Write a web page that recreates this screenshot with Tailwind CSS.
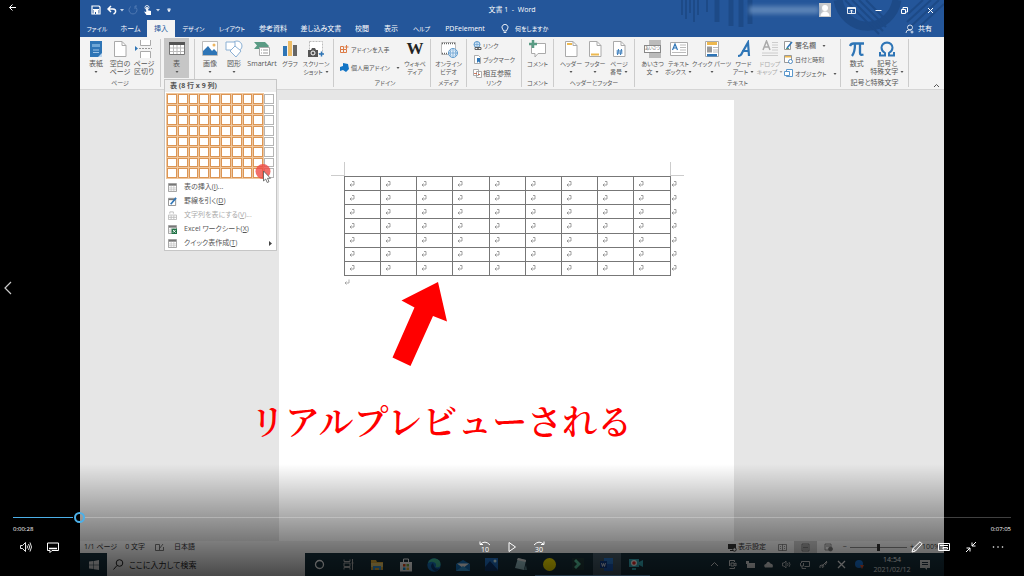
<!DOCTYPE html>
<html lang="ja">
<head>
    <meta charset="UTF-8">
    <meta name="viewport" content="width=device-width, initial-scale=1.0">
    <title>文書 1 - Word</title>
    <script src="https://cdn.jsdelivr.net/npm/@tailwindcss/browser@4"></script>
</head>
<body class="bg-black font-['Open_Sans','Noto_Sans_CJK_JP',sans-serif] text-[7px] leading-[8px] whitespace-nowrap [font-feature-settings:'palt']">
    <svg class="hidden">
        <symbol id="caret" viewBox="0 0 4 4"><path d="M.5 1h3L2 3z" fill="#555"/></symbol>
        <symbol id="grid" viewBox="0 0 10 10"><path d="M.5.5h9v9h-9z" fill="#fff" stroke="#999"/><path d="M1 1h8v2H1z" fill="#777"/><path d="M1 5.500h8M1 7.500h8M3.500 3v6M6.500 3v6" stroke="#bbb" stroke-width=".7"/></symbol>
        <symbol id="sheet" viewBox="0 0 18 18"><path d="M3.500 1.500h7.500l4 4v11h-11.500z" fill="#fff" stroke="#aaa"/><path d="M11 1.500v4h4" fill="none" stroke="#aaa"/></symbol>
    </svg>

    <div class="relative h-screen overflow-hidden">
        <!-- Recorded screen -->
        <div class="mx-20 flex h-full flex-col overflow-hidden">
            <header class="relative bg-[#24569a] text-white">
                <svg class="absolute right-0 top-0 h-[37px] w-[270px]" viewBox="0 0 270 37" fill="none" stroke="#1d4a87">
                    <path d="M8 0v15M12 0v19M16 0v13M20 0v22M24 0v15M33 0v12" stroke-width="2"/>
                    <path d="M43 0v22M57 0v26M67 0v27M76 0v24" stroke-width="5"/>
                    <path d="M164 0a30 32 0 0 0 59 0" stroke-width="9"/>
                    <path d="M171 0l34 34M178 0l31 31M185 0l27 27M192 0l22 22M265 0l-32 30M257 0l-24 22M249 0l-15 14M270 4l-26 24" stroke-width="2"/>
                </svg>
                <div class="relative grid h-5 grid-cols-[1fr_auto_1fr] items-center">
                    <div class="flex items-center pl-[11px]">
                        <button aria-label="上書き保存"><svg class="size-[10px]" viewBox="0 0 10 10"><path d="M1 1h7l1 1v7H1z" fill="none" stroke="#fff" stroke-width="1.200"/><path d="M2.500 5h5v4h-5z" fill="#fff"/><path d="M4 7h1v2H4z" fill="#24569a"/><path d="M2 4.500h6" stroke="#fff"/></svg></button>
                        <button class="ml-[6px]" aria-label="元に戻す"><svg class="size-[10px]" viewBox="0 0 10 10"><path d="M4 1L1 4l3 3M1 4h5q3 0 2.500 3Q8 8.500 6.500 9" fill="none" stroke="#fff" stroke-width="1.500"/></svg></button>
                        <svg class="ml-[3px] size-1" viewBox="0 0 4 4"><path d="M0 1h4L2 3.500z" fill="#ccd8ea"/></svg>
                        <button class="ml-[4px]" aria-label="やり直し"><svg class="size-[10px]" viewBox="0 0 10 10"><path d="M3 1.500a4 4 0 1 0 4 0M7 4V1h2" fill="none" stroke="#4f78b2"/></svg></button>
                        <button class="ml-[5px]" aria-label="タッチ"><svg class="size-[10px]" viewBox="0 0 10 10"><circle cx="4" cy="2.500" r="2" fill="none" stroke="#fff" stroke-width=".8"/><path d="M3.200 2h1.600v3.200l3.200.8V10H3.500L1 6.500l2.200.5z" fill="#fff"/></svg></button>
                        <svg class="ml-[3px] size-1" viewBox="0 0 4 4"><path d="M0 1h4L2 3.500z" fill="#ccd8ea"/></svg>
                        <svg class="ml-[7px] size-1" viewBox="0 0 4 4"><path d="M.5.5h3M.5 1.500h3L2 4z" stroke="#fff" stroke-width=".5" fill="#fff"/></svg>
                    </div>
                    <h1>文書 1 &nbsp;- &nbsp;Word</h1>
                    <div class="flex items-center justify-end pr-[9px]">
                        <div class="h-2 w-[70px] bg-[#5b83b6] blur-[2px]"></div>
                        <svg class="h-[14px] w-3" viewBox="0 0 12 14"><path d="M0 0h12v14H0z" fill="#ccc"/><circle cx="6" cy="5" r="3" fill="#fff"/><path d="M1.500 13c0-6 9-6 9 0z" fill="#fff"/></svg>
                        <button class="ml-[16px]" aria-label="リボンの表示オプション"><svg class="size-[9px]" viewBox="0 0 9 9" fill="none" stroke="#fff"><path d="M.5 1.500h8v6h-8zM.5 2.500h8M4.500 7V4M3 5.500L4.500 4 6 5.500" stroke-width=".9"/></svg></button>
                        <button class="ml-[18px]" aria-label="最小化"><svg class="size-[9px]" viewBox="0 0 9 9"><path d="M1.500 4.500h6" stroke="#fff"/></svg></button>
                        <button class="ml-[17px]" aria-label="元に戻す (縮小)"><svg class="size-[9px]" viewBox="0 0 9 9" fill="none" stroke="#fff"><path d="M1.500 3.500h4v4h-4zM3 3.500v-2h4.500V6H6"/></svg></button>
                        <button class="ml-[17px]" aria-label="閉じる"><svg class="size-[9px]" viewBox="0 0 9 9"><path d="M2 2l5 5M7 2L2 7" stroke="#fff"/></svg></button>
                    </div>
                </div>
                <nav class="relative flex h-[17px] items-stretch">
                    <button class="w-[34px] text-[6px]">ファイル</button>
                    <button class="w-[33px]">ホーム</button>
                    <button class="w-7 bg-[#f3f3f3] text-[#24569a]">挿入</button>
                    <button class="w-[37px] text-[6px]">デザイン</button>
                    <button class="w-10 text-[6px]">レイアウト</button>
                    <button class="w-[42px]">参考資料</button>
                    <button class="w-[54px]">差し込み文書</button>
                    <button class="w-7">校閲</button>
                    <button class="w-[30px]">表示</button>
                    <button class="w-[31px] text-[6px]">ヘルプ</button>
                    <button class="w-14">PDFelement</button>
                    <button class="ml-2 flex items-center gap-[6px]"><svg class="h-[10px] w-2" viewBox="0 0 8 10" fill="none" stroke="#fff" stroke-width=".9"><path d="M2.500 7Q2.500 6 1.500 5a3 3 0 1 1 5 0Q5.500 6 5.500 7zM2.700 8.500h2.600"/></svg><span class="text-[6px]">何をしますか</span></button>
                    <button class="ml-auto mr-3 flex items-center gap-[3px]"><svg class="size-[10px]" viewBox="0 0 10 10" fill="none" stroke="#fff" stroke-width=".8"><circle cx="5" cy="3.500" r="2.500"/><path d="M1 9q0-3 3-3h2M7 6.500v3M5.500 8h3"/></svg>共有</button>
                </nav>
            </header>

            <section class="relative flex h-[53px] shrink-0 border-b border-[#d5d5d5] bg-[#f3f3f3] text-[#555]">
                <div class="my-0.5 flex w-[81px] flex-col justify-between border-r border-[#ccc] px-1 pt-px">
                    <div class="flex">
                        <button class="flex w-6 flex-col items-center"><svg class="mb-0.5 size-[18px]" viewBox="0 0 18 18"><path d="M3 1h12v16H3z" fill="#2e75b6"/><path d="M5 4h8v3H5z" fill="#6ea6d6"/><path d="M6 10h6M6 12.500h6" stroke="#9cc3e6"/><path d="M11 17l4-4v4z" fill="#bcd6ee"/></svg>表紙<svg class="mt-0.5 size-1"><use href="#caret"/></svg></button>
                        <button class="flex w-6 flex-col items-center"><svg class="mb-0.5 size-[18px]"><use href="#sheet"/></svg>空白の<br>ページ</button>
                        <button class="flex w-6 flex-col items-center"><svg class="mb-0.5 size-[18px]" viewBox="0 0 18 18"><path d="M5.500 0v5.500h10V0M5.500 18v-6.500h10V18" fill="#fff" stroke="#aaa"/><path d="M4 8.500h13" stroke="#999" stroke-dasharray="2 1"/><path d="M0 6l3 2.500L0 11z" fill="#2e75b6"/></svg>ページ<br>区切り</button>
                    </div>
                    <span class="text-center text-[6px]">ページ</span>
                </div>
                <div class="w-[33px] pl-[3px] pt-px">
                    <button class="flex h-10 w-[25px] flex-col items-center bg-[#c6c6c6] pt-0.5"><svg class="mb-0.5 size-[18px]" viewBox="0 0 18 18"><path d="M1.500 2.500h15v12h-15z" fill="#fff" stroke="#777"/><path d="M1 2h16v3H1z" fill="#555"/><path d="M2 8h14M2 11.500h14M5.500 5v9M9 5v9M12.500 5v9" stroke="#bbb"/></svg>表<svg class="mt-0.5 size-1"><use href="#caret"/></svg></button>
                </div>
                <div class="my-0.5 flex w-[140px] border-x border-[#ccc] pl-[3px] pt-px">
                    <button class="flex w-6 flex-col items-center"><svg class="mb-0.5 size-[18px]" viewBox="0 0 18 18"><path d="M1.500 1.500h15v14h-15z" fill="#fff" stroke="#bbb"/><path d="M2 15v-4l5-5 4 5 2-2 3 3v3z" fill="#2e75b6"/><circle cx="13" cy="5" r="1.500" fill="#edb560"/></svg>画像<svg class="mt-0.5 size-1"><use href="#caret"/></svg></button>
                    <button class="flex w-6 flex-col items-center"><svg class="mb-0.5 size-[18px]" viewBox="0 0 18 18" fill="#fff" stroke="#8bb0d4"><circle cx="12" cy="6" r="5"/><path d="M1 2h9v8H1z"/><path d="M10 6l6 5-5 6-6-6z"/></svg>図形<svg class="mt-0.5 size-1"><use href="#caret"/></svg></button>
                    <button class="flex w-8 flex-col items-center"><svg class="mb-0.5 size-[18px]" viewBox="0 0 18 18"><path d="M1 2h11l4 4-2 3H1l3-3.500z" fill="#5a9b84"/><path d="M6.500 7.500h10v8h-10z" fill="#fff" stroke="#aaa"/><path d="M8 10h1M10 10h5M8 13h1M10 13h5" stroke="#999"/></svg>SmartArt</button>
                    <button class="flex w-6 flex-col items-center text-[6px]"><svg class="mb-0.5 size-[18px]" viewBox="0 0 18 18"><path d="M2 6h4v10H2z" fill="#2e75b6"/><path d="M7 1h4v15H7z" fill="#edbc67"/><path d="M12 5h4v11h-4z" fill="#666"/></svg>グラフ</button>
                    <button class="flex w-7 flex-col items-center text-[6px]"><svg class="mb-0.5 size-[18px]" viewBox="0 0 18 18"><path d="M2.500 1.500h13v12h-13z" fill="#fff" stroke="#bbb" stroke-dasharray="2 1"/><path d="M1 10h3l1-2h3l1 2h2v7H1z" fill="#555"/><circle cx="6" cy="13" r="2" fill="none" stroke="#fff"/><path d="M12 14h5M14.500 11.500v5" stroke="#2e75b6" stroke-width="1.500"/></svg>スクリーン<span class="flex items-center gap-0.5">ショット<svg class="size-1"><use href="#caret"/></svg></span></button>
                </div>
                <div class="my-0.5 flex w-[97px] flex-col justify-between border-r border-[#ccc] pl-[6px] pt-px">
                    <div class="flex">
                        <div class="flex w-[62px] flex-col gap-[9px] pt-[5px] text-[6px]">
                            <button class="flex items-center gap-0.5"><svg class="size-[9px]" viewBox="0 0 9 9" fill="none" stroke="#dd7b45"><path d="M.5 1.500h3v3h-3zM.5 4.500h3v3h-3zM3.500 4.500h3v3h-3zM6.500 0v4M4.500 2h4"/></svg>アドインを入手</button>
                            <button class="flex items-center gap-0.5"><svg class="size-[9px]" viewBox="0 0 9 9"><path d="M3 0l5 1 1 5-3 3-3-2-3 1V4l3-1z" fill="#1274c5"/></svg>個人用アドイン<svg class="ml-1 size-1"><use href="#caret"/></svg></button>
                        </div>
                        <button class="flex w-[26px] flex-col items-center text-[6px]"><span class="mb-0.5 h-[18px] font-['Liberation_Serif',serif] text-[17px] leading-[18px] font-bold text-[#222]">W</span>ウィキペ<br>ディア</button>
                    </div>
                    <span class="text-center text-[6px]">アドイン</span>
                </div>
                <div class="my-0.5 flex w-9 flex-col justify-between border-r border-[#ccc] pt-px text-[6px]">
                    <button class="flex flex-col items-center"><svg class="mb-0.5 size-[18px]" viewBox="0 0 18 18"><path d="M1.500 2.500h14v12h-14z" fill="#fff" stroke="#bbb"/><path d="M2 3.500h14M2 13.500h8" stroke="#666" stroke-width="1.500" stroke-dasharray="1 1"/><circle cx="13" cy="13" r="4.500" fill="#e4f0fa" stroke="#5b98cc"/><path d="M9 13h8M13 9v8M11 10q-2 3 0 6M15 10q2 3 0 6" fill="none" stroke="#5b98cc" stroke-width=".7"/></svg>オンライン<br>ビデオ</button>
                    <span class="text-center">メディア</span>
                </div>
                <div class="my-0.5 flex w-[55px] flex-col justify-between border-r border-[#ccc] pl-[6px] pt-0.5 text-[6px]">
                    <div class="flex flex-col gap-[5px]">
                        <button class="flex items-center gap-px"><svg class="size-[9px]" viewBox="0 0 9 9" fill="none"><circle cx="4" cy="3.500" r="3" fill="#d5e6f5" stroke="#5b98cc"/><path d="M1 3.500h6M4 .5v6" stroke="#5b98cc" stroke-width=".6"/><path d="M2 6.500h3v2H2zM5 6.500h3v2H5z" stroke="#555" stroke-width=".9"/></svg>リンク</button>
                        <button class="flex items-center gap-px"><svg class="size-[9px]" viewBox="0 0 9 9"><path d="M1.500.5h4l2 2v6h-6z" fill="#fff" stroke="#999" stroke-width=".8"/><path d="M4 3h3v5L5.500 6.500 4 8z" fill="#2e75b6"/></svg>ブックマーク</button>
                        <button class="flex items-center gap-px text-[7px]"><svg class="size-[9px]" viewBox="0 0 9 9" fill="#fff" stroke="#999" stroke-width=".8"><path d="M.5.500h5v6h-5zM3.500 2.500h5v6h-5z"/><path d="M1 4.500h3M5 5.500h2" stroke="#c55a3a"/></svg>相互参照</button>
                    </div>
                    <span class="pr-[6px] text-center">リンク</span>
                </div>
                <div class="my-0.5 flex w-8 flex-col justify-between border-r border-[#ccc] pt-px text-[6px]">
                    <button class="flex flex-col items-center"><svg class="mb-0.5 size-[18px]" viewBox="0 0 18 18"><path d="M2.500 3.500h14v10H9L6 17v-3.500H2.500z" fill="#fff" stroke="#aaa"/><path d="M0 4h8M4 0v8" stroke="#5a9b84" stroke-width="2.500"/></svg>コメント</button>
                    <span class="text-center">コメント</span>
                </div>
                <div class="my-0.5 flex w-[81px] flex-col justify-between border-r border-[#ccc] pl-[5px] pt-px text-[6px]">
                    <div class="flex">
                        <button class="flex w-6 flex-col items-center"><svg class="mb-0.5 size-[18px]" viewBox="0 0 18 18"><use href="#sheet"/><path d="M5 4h5" stroke="#edb84f" stroke-width="2"/></svg>ヘッダー<svg class="mt-0.5 size-1"><use href="#caret"/></svg></button>
                        <button class="flex w-6 flex-col items-center"><svg class="mb-0.5 size-[18px]" viewBox="0 0 18 18"><use href="#sheet"/><path d="M5 14.500h8" stroke="#edb84f" stroke-width="2"/></svg>フッター<svg class="mt-0.5 size-1"><use href="#caret"/></svg></button>
                        <button class="flex w-6 flex-col items-center"><svg class="mb-0.5 size-[18px]" viewBox="0 0 18 18"><use href="#sheet"/><path d="M8.500 9l-1 6M11.500 9l-1 6M6.500 11h6M6.500 13h6" stroke="#2e75b6"/></svg>ページ<span class="flex items-center gap-0.5">番号<svg class="size-1"><use href="#caret"/></svg></span></button>
                    </div>
                    <span class="pr-[5px] text-center">ヘッダーとフッター</span>
                </div>
                <div class="my-0.5 flex w-[206px] flex-col justify-between border-r border-[#ccc] pl-[5px] pt-px text-[6px]">
                    <div class="flex">
                        <button class="flex w-[25px] flex-col items-center"><span class="mb-0.5 flex h-[18px] items-center bg-[linear-gradient(to_right,transparent_30%,#bbb_30%)]"><span class="border border-[#888] bg-white text-[4px] leading-[6px]">あいさつ</span></span>あいさつ<span class="flex items-center gap-0.5">文<svg class="size-1"><use href="#caret"/></svg></span></button>
                        <button class="flex w-[27px] flex-col items-center"><svg class="mb-0.5 size-[18px]" viewBox="0 0 18 18"><path d="M.5 2.500h17v13H.5z" fill="#fff" stroke="#aaa"/><path d="M2.500 10L5 4l2.500 6M3.500 8h3" fill="none" stroke="#2e75b6" stroke-width="1.200"/><path d="M10 5h6M10 7.500h6M10 10h6M2 12.500h14" stroke="#bbb"/></svg>テキスト<span class="flex items-center gap-0.5">ボックス<svg class="size-1"><use href="#caret"/></svg></span></button>
                        <button class="flex w-[39px] flex-col items-center"><svg class="mb-0.5 size-[18px]" viewBox="0 0 18 18"><path d="M2.500 1.500h13v15h-13z" fill="#fff" stroke="#aaa"/><path d="M4 2h10v3H4z" fill="#edb84f"/><path d="M4 6.500h5v6H4z" fill="#999"/><path d="M10 7.500h5M10 10h5M10 12h5" stroke="#bbb"/><path d="M4 14h10v2.500H4z" fill="#2e75b6"/></svg>クイック パーツ<svg class="mt-0.5 size-1"><use href="#caret"/></svg></button>
                        <button class="flex w-[25px] flex-col items-center"><svg class="mb-0.5 size-[18px]" viewBox="0 0 18 18"><path d="M3 16q3 0 4-3l6-10.500L14 16M7 11h7" fill="none" stroke="#2e75b6" stroke-width="2.200"/></svg>ワード<span class="flex items-center gap-0.5">アート<svg class="size-1"><use href="#caret"/></svg></span></button>
                        <button disabled class="flex w-[28px] flex-col items-center text-[#aaa]"><svg class="mb-0.5 size-[18px]" viewBox="0 0 18 18" fill="none" stroke="#aaa"><path d="M2 10l3.500-9L9 10M3.500 7h4" stroke-width="1.500"/><path d="M11 2.500h6M11 5h6M11 7.500h6M11 10h6M1 13h16M1 15.500h16" stroke="#ccc"/></svg>ドロップ<span class="flex items-center gap-0.5">キャップ<svg class="size-1 opacity-50"><use href="#caret"/></svg></span></button>
                        <div class="flex flex-col gap-[5px] pt-px">
                            <button class="flex items-center gap-0.5 text-[7px]"><svg class="size-[9px]" viewBox="0 0 9 9"><path d="M.5.500h6v8h-6z" fill="#fff" stroke="#999"/><path d="M3 7l5-6" stroke="#2e75b6" stroke-width="1.500"/><path d="M2 7.500h3" stroke="#5a9b84"/></svg>署名欄<svg class="ml-1 size-1"><use href="#caret"/></svg></button>
                            <button class="flex items-center gap-0.5"><svg class="size-[9px]" viewBox="0 0 9 9"><path d="M.5.500h7v7h-7z" fill="#fff" stroke="#999"/><path d="M1 1h6v1.500H1z" fill="#edb84f"/><circle cx="6.500" cy="6.500" r="2" fill="#fff" stroke="#2e75b6" stroke-width=".8"/></svg>日付と時刻</button>
                            <button class="flex items-center gap-0.5"><svg class="size-[9px]" viewBox="0 0 9 9" fill="#fff" stroke="#5b98cc"><path d="M2.500.500h6v7h-6z"/><path d="M.5 2.500h5v4h-5z"/></svg>オブジェクト<svg class="ml-1 size-1"><use href="#caret"/></svg></button>
                        </div>
                    </div>
                    <span class="pr-[5px] text-center">テキスト</span>
                </div>
                <div class="my-0.5 flex w-[68px] flex-col justify-between border-r border-[#ccc] pt-px">
                    <div class="flex justify-between pl-1 pr-0.5">
                        <button class="flex w-6 flex-col items-center"><svg class="mb-0.5 size-[18px]" viewBox="0 0 18 18" fill="none" stroke="#2e75b6" stroke-width="2.300"><path d="M2 6q1-2.500 3.500-2.500H16M7 4q0 8-3 12M12 4v9q0 2.500 3.500 1.500"/></svg>数式<svg class="mt-0.5 size-1"><use href="#caret"/></svg></button>
                        <button class="flex w-[38px] flex-col items-center"><svg class="mb-0.5 size-[18px]" viewBox="0 0 18 18" fill="none" stroke="#2e75b6" stroke-width="2"><path d="M2 12v3.500h5V13Q3.500 11 3.500 7.500 4 3 9 2.500q5 .5 5.500 5Q14.500 11 11 13v2.500h5V12"/></svg>記号と<span class="flex items-center gap-0.5">特殊文字<svg class="size-1"><use href="#caret"/></svg></span></button>
                    </div>
                    <span class="text-center">記号と特殊文字</span>
                </div>
                <button class="ml-auto mr-1 mt-auto" aria-label="リボンを折りたたむ"><svg class="size-[7px]" viewBox="0 0 7 7"><path d="M1 5l2.500-2.500L6 5" fill="none" stroke="#555"/></svg></button>

                <!-- 表 menu -->
                <div class="absolute left-[84px] top-[42px] z-10 w-[113px] border border-[#c6c6c6] bg-white text-[#555]">
                    <h2 class="bg-[#eee] py-0.5 pl-[5px] font-bold">表 (8 行 x 9 列)</h2>
                    <div id="sizePicker" class="mx-0.5 mt-0.5 mb-0.5 grid h-[84px] w-[107px] grid-cols-10 gap-px"></div>
                    <button class="flex h-[14px] w-full items-center gap-[7px] px-[3px]"><svg class="size-[9px]"><use href="#grid"/></svg><span>表の挿入(<u>I</u>)...</span></button>
                    <button class="flex h-[14px] w-full items-center gap-[7px] px-[3px]"><svg class="size-[9px]" viewBox="0 0 10 10"><path d="M.5 1.500h8v8h-8z" fill="#fff" stroke="#888"/><path d="M1 2h7v1.500H1z" fill="#777"/><path d="M3 8l6-7" stroke="#2e75b6" stroke-width="1.800"/></svg><span>罫線を引く(<u>D</u>)</span></button>
                    <button disabled class="flex h-[14px] w-full items-center gap-[7px] px-[3px] text-[#aaa]"><svg class="size-[9px]" viewBox="0 0 10 10" fill="none" stroke="#bbb"><path d="M.5 4.500h9v5h-9zM.5 7h9M3.500 5v4M6.500 5v4M2 3V1h4v2"/></svg><span>文字列を表にする(<u>V</u>)...</span></button>
                    <button class="flex h-[14px] w-full items-center gap-[7px] px-[3px]"><svg class="size-[9px]" viewBox="0 0 10 10"><use href="#grid"/><path d="M4 4h6v6H4z" fill="#217346"/><path d="M5.500 5.500l3 3M8.500 5.500l-3 3" stroke="#fff"/></svg><span>Excel ワークシート(<u>X</u>)</span></button>
                    <button class="flex h-[14px] w-full items-center gap-[7px] px-[3px]"><svg class="size-[9px]"><use href="#grid"/></svg><span>クイック表作成(<u>T</u>)</span><svg class="ml-auto size-[5px]" viewBox="0 0 5 5"><path d="M1 0l3 2.500L1 5z" fill="#444"/></svg></button>
                    <svg class="absolute left-[90px] top-[84px] h-5 w-[18px]" viewBox="0 0 18 20"><circle cx="8" cy="7.500" r="7.500" fill="#ef4b45" fill-opacity=".8"/><path d="M8.500 7v10l2.200-2 1.500 3.500 1.800-.8-1.500-3.400h3z" fill="#fff" stroke="#555" stroke-width=".8"/></svg>
                </div>
            </section>

            <main class="flex flex-1 justify-center overflow-hidden bg-[#e6e6e6] pr-[11px] pt-[10px]">
                <article class="relative w-[455px] bg-white pl-[52px] pt-[62px]">
                    <div class="flex w-[353px] justify-between">
                        <span class="h-[14px] w-[14px] border-r border-b border-[#ccc]"></span>
                        <span class="h-[14px] w-[14px] border-l border-b border-[#ccc]"></span>
                    </div>
                    <table class="ml-[13px] h-[100px] w-[340px] table-fixed border-collapse text-[#888]">
                        <colgroup><col span="9"><col class="w-[14px]"></colgroup>
                        <tbody id="previewTable"></tbody>
                    </table>
                    <p class="ml-[13px] mt-[3px] text-[#999]"><svg class="size-[6px]" viewBox="0 0 6 6" fill="none" stroke="#999" stroke-width=".8"><path d="M5 .5V4H1M2.500 2.500L1 4l1.500 1.500"/></svg></p>
                    <svg class="absolute left-[113px] top-[182px] h-[85px] w-[56px]" viewBox="0 0 56 85"><path d="M46 0l9 39.500-14-5.500-22.500 50L.500 75.500 22.500 25.500 9.500 18.500z" fill="#f00"/></svg>
                    <p class="absolute -left-[29px] top-[300px] font-['Noto_Serif_CJK_JP','Noto_Sans_CJK_JP',serif] text-[35px] leading-[40px] font-semibold text-[#f00] [font-feature-settings:normal]">リアルプレビューされる</p>
                </article>
            </main>

            <footer class="flex h-3 shrink-0 items-center bg-[#f3f3f3] px-1 text-[#333]">
                <span>1/1 ページ</span>
                <span class="ml-2">0 文字</span>
                <svg class="ml-[10px] size-[9px]" viewBox="0 0 9 9" fill="none" stroke="#555" stroke-width=".8"><path d="M.5 1.500h4v6h-4zM8 1L4.500 5.500M4.500 7.500h4V4"/></svg>
                <span class="ml-[10px]">日本語</span>
                <span class="ml-auto flex items-center gap-px"><svg class="size-[9px]" viewBox="0 0 9 9"><path d="M0 1h8v5H0zM2 7h3v1H2z" fill="#333"/><circle cx="6.500" cy="6.500" r="1.700" fill="#fff" stroke="#333"/></svg>表示設定</span>
                <button class="ml-3" aria-label="閲覧モード"><svg class="size-[9px]" viewBox="0 0 9 9" fill="none" stroke="#777" stroke-width=".8"><path d="M.5 1.500h8v6h-8zM4.500 1v7M2 3.500h1M2 5.500h1M6 3.500h1M6 5.500h1"/></svg></button>
                <button class="ml-[7px] flex h-3 w-[23px] items-center justify-center bg-[#c8c8c8]" aria-label="印刷レイアウト"><svg class="size-[9px]" viewBox="0 0 9 9" fill="none" stroke="#666" stroke-width=".8"><path d="M1 1h7v7H1zM2 3h5M2 4.500h5M2 6h5"/></svg></button>
                <button class="ml-[7px]" aria-label="Web レイアウト"><svg class="size-[9px]" viewBox="0 0 9 9" fill="none" stroke="#777" stroke-width=".8"><path d="M1 1h6v6H1zM2 3h4"/><circle cx="6.500" cy="6" r="2" fill="#777"/></svg></button>
                <span class="ml-[10px]">−</span>
                <input type="range" min="10" max="190" value="100" aria-label="ズーム" class="mx-[3px] h-2 w-[57px] appearance-none bg-[linear-gradient(#888,#888)] bg-[length:100%_1px] bg-center bg-no-repeat [&::-webkit-slider-thumb]:h-[7px] [&::-webkit-slider-thumb]:w-[3px] [&::-webkit-slider-thumb]:appearance-none [&::-webkit-slider-thumb]:bg-[#333]">
                <span>+</span>
                <span class="ml-2 w-[18px]">100%</span>
            </footer>

            <div class="flex h-[23px] shrink-0 items-stretch bg-[#17303c] text-white">
                <button class="flex w-[27px] items-center justify-center" aria-label="スタート"><svg class="size-[10px]" viewBox="0 0 10 10" fill="#ddd"><path d="M0 1.500L4.500 1v3.700H0zM5 .900L10 0v4.700H5zM0 5.200h4.500V9L0 8.500zM5 5.200h5V10L5 9.200z"/></svg></button>
                <label class="flex w-[198px] items-center gap-[5px] bg-[#f3f3f3] pl-[6px]">
                    <svg class="size-[11px]" viewBox="0 0 11 11" fill="none" stroke="#222"><circle cx="6.500" cy="4" r="3.300"/><path d="M4 6.500L.5 10.500"/></svg>
                    <input type="text" aria-label="検索" placeholder="ここに入力して検索" class="w-40 text-[8px] leading-[12px] placeholder:text-[#222]">
                </label>
                <div class="flex w-[345px] *:flex *:flex-1 *:items-center *:justify-center">
                    <button aria-label="Cortana"><svg class="size-[11px]" viewBox="0 0 11 11"><circle cx="5.500" cy="5.500" r="4" fill="none" stroke="#fff" stroke-width="1.300"/></svg></button>
                    <button aria-label="タスク ビュー"><svg class="size-[11px]" viewBox="0 0 11 11" fill="none" stroke="#bbb"><path d="M1 .500v2h6v-2M1 4h6v3.500H1zM1 10.500v-2h6v2M9.500 0v11M8.500 4h2"/></svg></button>
                    <button aria-label="エクスプローラー"><svg class="size-[14px]" viewBox="0 0 14 14"><path d="M1 2h5l1 2h6v8H1z" fill="#e8b33c"/><path d="M1 5h12v4H1z" fill="#f8d775"/><path d="M3 12V8h8v4H9v-2H5v2z" fill="#3b9be0"/></svg></button>
                    <button aria-label="Microsoft Store"><svg class="size-[14px]" viewBox="0 0 14 14"><path d="M4.500 4V1h5v3" fill="none" stroke="#fff"/><path d="M1 4h12v9.500H1z" fill="#fff"/><path d="M4 6h2.500v2.500H4z" fill="#e64a19"/><path d="M7.500 6H10v2.500H7.500z" fill="#7cb342"/><path d="M4 9.500h2.500V12H4z" fill="#039be5"/><path d="M7.500 9.500H10V12H7.500z" fill="#fbc02d"/></svg></button>
                    <button aria-label="Edge"><svg class="size-[14px]" viewBox="0 0 14 14"><circle cx="7" cy="7" r="6.700" fill="#1678c8"/><path d="M1 5Q3 0 8 .500q6 1 5.500 6.500-.5 3-5 2 1.500-3-1-4.500T1 5z" fill="#42c8a0"/><path d="M6 5q-3 2-1.500 5Q6 13 9 13q3-1 4-3-5 2-6-2z" fill="#0b3f7c"/></svg></button>
                    <button aria-label="メール"><svg class="size-[14px]" viewBox="0 0 14 14"><path d="M0 6l7-4 7 4v7H0z" fill="#1478c8"/><path d="M1 5.500h12L7 10z" fill="#fff"/><path d="M0 13l7-5 7 5z" fill="#38a7ec"/></svg></button>
                    <button aria-label="フォト"><svg class="size-[13px]" viewBox="0 0 13 13"><path d="M0 0h13v13H0z" fill="#2274cc"/><path d="M0 13V9l5-6 8 9v1z" fill="#0d3770"/><circle cx="10" cy="3" r="1.500" fill="#dff"/></svg></button>
                    <button aria-label="メモ帳"><svg class="size-[13px]" viewBox="0 0 13 13"><path d="M4 0l8 2-2 10-9-2z" fill="#9ec8d0"/><path d="M4 0l8 2-.4 2L3 2z" fill="#e8e8e8"/><path d="M10 12l2-5 1 5z" fill="#618c96"/></svg></button>
                    <button aria-label="録画" class="border-b border-[#76b9ed]"><svg class="size-[13px]" viewBox="0 0 13 13"><circle cx="6.500" cy="6.500" r="6.500" fill="#ffeb00"/></svg></button>
                    <button aria-label="Filmora" class="border-b border-[#76b9ed]"><svg class="size-[12px]" viewBox="0 0 12 12"><path d="M0 0h12v12H0z" fill="#203b3b"/><path d="M4 1l5 5-5 5-2-2 3-3-3-3z" fill="#60d3aa"/></svg></button>
                    <button aria-label="Word" class="border-b border-[#76b9ed] bg-[#455b69]"><svg class="size-[13px]" viewBox="0 0 13 13"><path d="M4 0h9v13H4z" fill="#2b7cd3"/><path d="M4 6h9v7H4z" fill="#185abd"/><path d="M0 3h7v7H0z" fill="#103f91"/><path d="M1.500 5l1 3.500 1-3 1 3 1-3.500" fill="none" stroke="#fff" stroke-width=".8"/></svg></button>
                    <button aria-label="画面録画" class="border-b border-[#76b9ed]"><svg class="size-[14px]" viewBox="0 0 14 14"><path d="M0 2h10v8H0zM10 5l4-2v7l-4-2zM3 11h4v2H3z" fill="#36b1bf"/><circle cx="5" cy="6" r="3" fill="#fff"/><circle cx="5" cy="6" r="1.800" fill="#ef2626"/></svg></button>
                </div>
                <div class="ml-auto flex items-center gap-[9px]">
                    <svg class="size-[9px]" viewBox="0 0 9 9" fill="none" stroke="#ddd"><path d="M1 6l3.500-3.500L8 6"/></svg>
                    <svg class="size-[9px]" viewBox="0 0 9 9" fill="none" stroke="#ddd"><path d="M1.500 6V.500h5V2M1.500 8.500h5V7M3 3h3v3H3zM6 4l2-1v3L6 5"/></svg>
                    <svg class="size-[9px]" viewBox="0 0 9 9" fill="#ddd"><path d="M1 3h8v5H1zM0 1h3v3H0z"/></svg>
                    <svg class="size-[9px]" viewBox="0 0 9 9" fill="#ddd"><path d="M1 7.500q-2-3 1-3.500 2-4 4.500-.500Q10 4 8.500 7.500z"/></svg>
                    <svg class="size-[9px]" viewBox="0 0 9 9" fill="none" stroke="#ddd" stroke-width=".8"><path d="M.5 3h1.500l2-2v7l-2-2H.5zM5.500 3q1 1.500 0 3M7 2q2 2.500 0 5"/></svg>
                    <svg class="size-[10px]" viewBox="0 0 10 10" fill="none" stroke="#ddd" stroke-width=".9"><path d="M1.500 3v-1.500h8v5h-5M.5 3v3h3V3M2 6v2.500h4"/></svg>
                    <svg class="size-[9px]" viewBox="0 0 9 9" fill="none" stroke="#ddd"><path d="M1 8q-1-3 2-3t1 2.500Q3 8 3 6l5-5M6 5L8 2"/></svg>
                    <svg class="size-[9px]" viewBox="0 0 9 9" fill="none" stroke="#fff" stroke-width="1.300"><path d="M1 1l7 7M8 1L1 8"/></svg>
                    <svg class="size-[9px]" viewBox="0 0 9 9"><circle cx="4" cy="4" r="4" fill="#1a78dc"/><path d="M5 5h4L7 9z" fill="#e85732"/></svg>
                    <time class="w-[38px] text-center leading-[10px]">14:54<br>2021/02/12</time>
                    <svg class="mr-[14px] h-[10px] w-[10px]" viewBox="0 0 10 10"><path d="M0 0h10v8H7v2L5 8H0z" fill="#ddd"/><path d="M2 2.500h6M2 4.500h6" stroke="#234"/></svg>
                </div>
            </div>
        </div>

        <!-- Player controls -->
        <button class="absolute left-2 top-[3px]" aria-label="戻る"><svg class="size-[9px]" viewBox="0 0 9 9" fill="none" stroke="#fff"><path d="M4.500 1.500l-3 3 3 3M1.500 4.500h6.500"/></svg></button>
        <button class="absolute left-1 top-1/2 -translate-y-1/2" aria-label="前へ"><svg class="h-[14px] w-2" viewBox="0 0 8 14" fill="none" stroke="#ccc" stroke-width="1.200"><path d="M7 1L1 7l6 6"/></svg></button>
        <div class="absolute inset-x-0 bottom-0 z-20 flex h-[112px] flex-col justify-end bg-linear-to-b from-transparent to-black/70 text-white">
            <input type="range" max="1000" value="62" aria-label="シーク" class="mx-[13px] h-3 appearance-none bg-[linear-gradient(to_right,#4cb0e8_6%,transparent_6%,transparent_7%,rgba(255,255,255,0.25)_7%)] bg-[length:100%_1px] bg-center bg-no-repeat [&::-webkit-slider-thumb]:size-[11px] [&::-webkit-slider-thumb]:appearance-none [&::-webkit-slider-thumb]:rounded-full [&::-webkit-slider-thumb]:border-2 [&::-webkit-slider-thumb]:border-solid [&::-webkit-slider-thumb]:border-[#4cb0e8] [&::-webkit-slider-thumb]:bg-transparent">
            <div class="flex justify-between px-[13px] pt-0.5 text-[6px]"><time>0:00:28</time><time>0:07:05</time></div>
            <div class="mt-[6px] mb-[21px] grid h-4 grid-cols-3 items-center">
                <div class="flex gap-[15px] pl-5">
                    <button aria-label="音量"><svg class="size-3" viewBox="0 0 12 12" fill="none" stroke="#fff" stroke-width=".9"><path d="M.5 4.500h2l3-3v9l-3-3h-2zM7 4.500q1 1.500 0 3M8.500 3q2.200 3 0 6M10 1.500q3 4.500 0 9"/></svg></button>
                    <button aria-label="字幕"><svg class="size-3" viewBox="0 0 12 12" fill="none" stroke="#fff"><path d="M.5 2h11v7.500H5L3 11.500v-2H.500z"/><path d="M2 7.500h8" stroke-width="1.500"/></svg></button>
                </div>
                <div class="flex justify-center gap-[15px]">
                    <button aria-label="10 秒戻る" class="flex size-3 flex-col items-center"><svg class="h-[5px] w-3" viewBox="0 0 12 5" fill="none" stroke="#fff"><path d="M1 .500v3h3M1 3.500q5-5 10 .500"/></svg><span class="text-[7px] leading-[7px]">10</span></button>
                    <button aria-label="再生"><svg class="size-3" viewBox="0 0 12 12" fill="none" stroke="#fff"><path d="M3 1.500l6.500 4.500L3 10.500z"/></svg></button>
                    <button aria-label="30 秒進む" class="flex size-3 flex-col items-center"><svg class="h-[5px] w-3" viewBox="0 0 12 5" fill="none" stroke="#fff"><path d="M11 .500v3H8M11 3.500q-5-5-10 .500"/></svg><span class="text-[7px] leading-[7px]">30</span></button>
                </div>
                <div class="flex justify-end gap-[15px] pr-5">
                    <button aria-label="編集"><svg class="size-3" viewBox="0 0 12 12" fill="none" stroke="#fff"><path d="M1 11l1-3.500L9 .800l2 2L4.500 10zM2 7.500L4.500 10"/></svg></button>
                    <button aria-label="ミニ ビュー"><svg class="size-3" viewBox="0 0 12 12" fill="none" stroke="#fff"><path d="M.5 2.500h11v7H.5zM2 4.500h8M5 6.500h4.500v1.500H5z"/></svg></button>
                    <button aria-label="全画面表示の終了"><svg class="size-3" viewBox="0 0 12 12" fill="none" stroke="#fff"><path d="M11 1L7 5M7 1.500V5h3.500M1 11l4-4M5 10.500V7H1.500"/></svg></button>
                    <button aria-label="その他"><svg class="size-3" viewBox="0 0 12 12" fill="#fff"><circle cx="1.500" cy="6" r=".8"/><circle cx="6" cy="6" r=".8"/><circle cx="10.500" cy="6" r=".8"/></svg></button>
                </div>
            </div>
        </div>
    </div>

    <script>
        const returnMark = `<svg class="ml-1 size-[6px]" viewBox="0 0 6 6" fill="none" stroke="#888" stroke-width=".8"><path d="M3 .5h2V4H1M2.500 2.500L1 4l1.500 1.500"/></svg>`;

        // 8 x 10 size picker, the last column is not selected
        const sizePicker = document.getElementById('sizePicker');
        for (let i = 0; i < 80; i++) {
            const color = i % 10 === 9 ? 'border-[#b5b5b5]' : 'border-[#dc9554] outline outline-[#efc79e]';
            sizePicker.innerHTML += `<span class="border bg-white ${color}"></span>`;
        }

        const previewTable = document.getElementById('previewTable');
        for (let r = 0; r < 7; r++) {
            let cells = '';
            for (let c = 0; c < 9; c++) {
                cells += `<td class="border border-[#777] p-0">${returnMark}</td>`;
            }
            previewTable.innerHTML += `<tr>${cells}<td class="p-0">${returnMark.replace('ml-1 ', '')}</td></tr>`;
        }
    </script>
</body>
</html>
